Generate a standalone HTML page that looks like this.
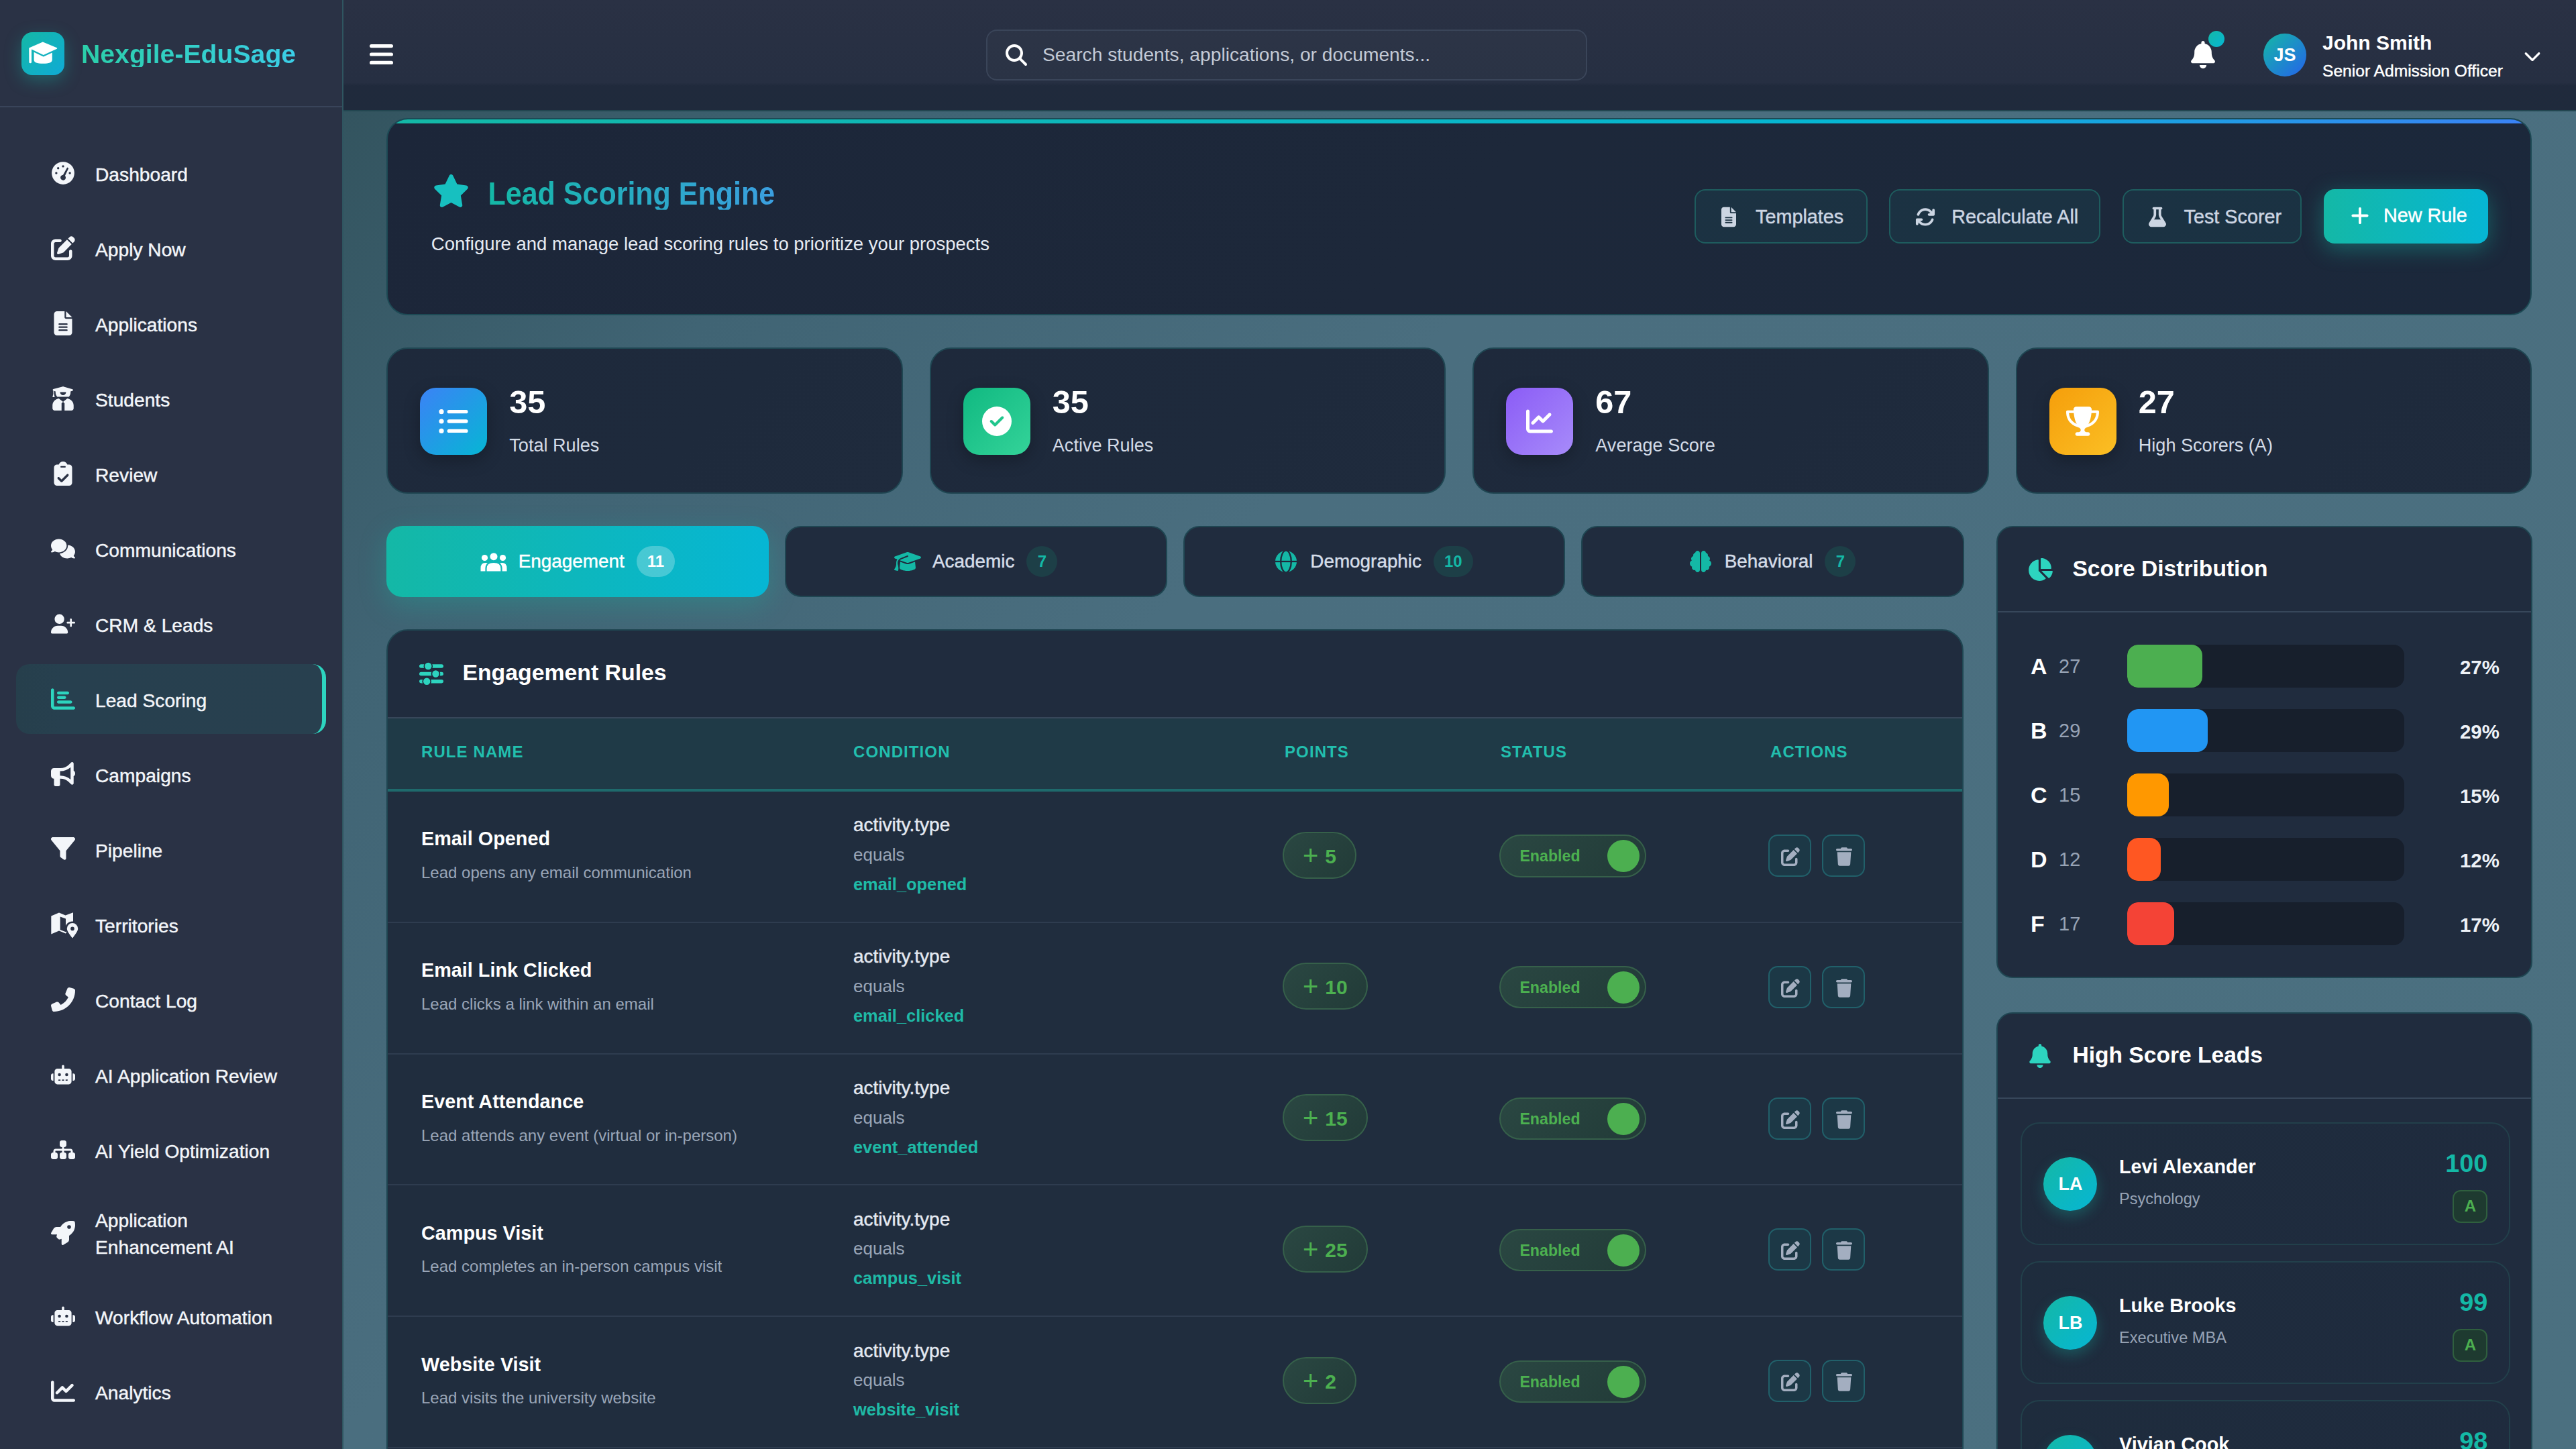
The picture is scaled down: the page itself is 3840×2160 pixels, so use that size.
<!DOCTYPE html>
<html><head><meta charset="utf-8"><title>Lead Scoring</title>
<style>
*{margin:0;padding:0;box-sizing:border-box}
html{zoom:2}
@media (max-width:2500px){html{zoom:1}}
body{width:1920px;height:1080px;overflow:hidden;font-family:"Liberation Sans",sans-serif;background:#2a3245}
#app{position:relative;width:1920px;height:1080px;overflow:hidden}
svg{display:block}
/* sidebar */
.sb{position:absolute;left:0;top:0;width:256px;height:1080px;background:#2a3245;border-right:1px solid #2f5560;z-index:3}
.logo{position:absolute;left:0;top:0;width:255px;height:80px;border-bottom:1px solid #39445a}
.lbox{position:absolute;left:16px;top:24px;width:32px;height:32px;border-radius:8px;background:linear-gradient(135deg,#14b8a6,#0ea5e9 140%);box-shadow:0 4px 12px rgba(20,184,166,.35)}
.lbox svg{position:absolute;left:6px;top:6px;width:20px;height:20px;color:#fff}
.ltxt{position:absolute;left:60.5px;top:30.4px;font-size:19.6px;line-height:19.6px;font-weight:700;background:linear-gradient(90deg,#2bcfa9,#3bcfe8);-webkit-background-clip:text;background-clip:text;color:transparent;white-space:nowrap}
.nav{position:absolute;left:12px;width:231px;border-radius:10px;color:#f3f6fa}
.nav.active{background:linear-gradient(90deg,#263f4c,#27404f 15%,#28404f);border-right:3px solid #2dd4bf}
.ni{position:absolute;left:26px;top:50%;width:18px;height:18px;margin-top:-9px}
.ni svg{width:18px;height:18px;margin:auto}
.nav.active .ni{color:#2dd4bf}
.nt{position:absolute;left:59px;top:16.8px;font-size:14.1px;line-height:20px;white-space:nowrap}
/* header */
.hd{position:absolute;left:256px;top:0;width:1664px;height:83px;background:linear-gradient(180deg,#2a3144 0%,#262f42 75%,#202a3c 78%,#1f2a3c 100%);border-bottom:1px solid #224650;z-index:2}
.hamb{position:absolute;left:19.6px;top:33px;width:17.5px;height:15px;color:#fff}
.hamb svg{width:17.5px;height:15px}
.search{position:absolute;left:479px;top:22px;width:448px;height:38px;border-radius:8px;border:1px solid #3a4559;background:rgba(255,255,255,.02)}
.search .si{position:absolute;left:13.5px;top:10px;width:16px;height:16px;color:#fff}
.search span{position:absolute;left:41px;top:10.5px;font-size:14.1px;line-height:14.1px;color:#c3cad6;white-space:nowrap}
.bell{position:absolute;left:1377px;top:30.5px;width:18px;height:20.5px;color:#fff}
.bell svg{width:18px;height:20.5px}
.bell i{position:absolute;left:13px;top:-7.5px;width:12px;height:12px;border-radius:50%;background:linear-gradient(135deg,#14b8a6,#06b6d4)}
.av{position:absolute;left:1431px;top:24.8px;width:32px;height:32px;border-radius:50%;background:linear-gradient(135deg,#14b8a6,#2563eb);color:#fff;font-weight:700;font-size:13.5px;line-height:32px;text-align:center}
.uname{position:absolute;left:1475px;top:24.6px;font-size:15px;line-height:15px;font-weight:700;color:#fff;white-space:nowrap}
.urole{position:absolute;left:1475px;top:47px;font-size:12.3px;line-height:12.3px;color:#fff;white-space:nowrap}
.chev{position:absolute;left:1625px;top:35px;width:13px;height:13px;color:#fff}
.chev svg{width:13px;height:13px}
/* main */
main{position:absolute;left:256px;top:83px;width:1664px;height:997px;background:linear-gradient(135deg,#33545f 0%,#406474 16%,#4a6e7f 37%,#4b7080 100%);z-index:1}
main>section,main>.tab{position:absolute}
.hero{left:32px;top:5px;width:1599px;height:147px;border-radius:16px;background:linear-gradient(135deg,#1c2639,#1d283a 50%,#1b283b);border:1px solid #1d4a55;overflow:hidden}
.hero:before{content:"";position:absolute;left:0;top:0;right:0;height:3px;background:linear-gradient(90deg,#14b8a6,#06b6d4 70%,#3b82f6)}
.hstar{position:absolute;left:33.3px;top:40.5px;width:27.5px;height:25.5px;color:#17c0c0}
.hstar svg{width:27.5px;height:25.5px}
h1{position:absolute;left:74.75px;top:45.6px;transform:scaleY(1.11);transform-origin:0 18.2px;font-size:21.5px;line-height:21.5px;font-weight:700;background:linear-gradient(90deg,#14b8a6,#3b9fe0);-webkit-background-clip:text;background-clip:text;color:transparent;white-space:nowrap}
.sub{position:absolute;left:32.4px;top:86px;font-size:13.74px;line-height:13.74px;color:#e6ebf2;white-space:nowrap}
.btn{position:absolute;top:52.1px;height:40.4px;border-radius:8px;border:1px solid #1e5c5e;background:rgba(20,184,166,.08);color:#ccd5e2}
.btn svg{position:absolute;top:12px;width:15px;height:15.5px;color:#ccd5e2}
.btn span{position:absolute;top:12.6px;font-size:14.4px;line-height:14.4px;white-space:nowrap}
.b1{left:974px;width:128.75px}.b1 svg{left:19px;width:11px}.b1 span{left:44.5px}
.b2{left:1119.15px;width:157.35px}.b2 svg{left:18.5px;width:15px}.b2 span{left:45.5px}
.b3{left:1293.15px;width:133.4px}.b3 svg{left:18.5px;width:13px}.b3 span{left:44.6px}
.b4{left:1442.95px;width:122.75px}.b4 svg{left:19.5px;width:15px}.b4 span{left:44.5px}
.prim{background:linear-gradient(90deg,#14b8a6,#06b6d4);border:none;color:#fff;box-shadow:0 4px 16px rgba(20,184,166,.4)}
.prim svg{color:#fff}
.stat{top:175.8px;width:384.75px;height:109.2px;border-radius:16px;background:linear-gradient(135deg,#1e293b,#1e2a3c 60%,#1f2b3d);border:1px solid #1f4652}
.s1{left:32px}.s2{left:436.75px}.s3{left:841.5px}.s4{left:1246.25px}
.sic{position:absolute;left:24px;top:29.2px;width:50px;height:50px;border-radius:12px;box-shadow:0 4px 12px rgba(0,0,0,.25)}
.sic svg{position:absolute;left:15px;top:15px;width:20px;height:20px;color:#fff}
.sn{position:absolute;left:90.65px;top:27.7px;font-size:24.3px;line-height:24.3px;font-weight:700;color:#fff}
.sl{position:absolute;left:90.65px;top:65.2px;font-size:13.54px;line-height:13.54px;color:#d3dbe7;white-space:nowrap}
.tab{top:309px;width:284.9px;height:53px;border-radius:12px;background:#202c3e;border:1px solid #1f4652;display:flex;align-items:center;justify-content:center;color:#d5dde8}
.t1{left:32px}.t2{left:328.9px}.t3{left:625.8px}.t4{left:922.6px;width:285.4px}
.tab svg{width:20px;height:18px;color:#14b8a6;margin-right:8.5px}
.tab .tl{font-size:13.93px;line-height:14px}
.tab .tb{margin-left:9px;height:23px;min-width:23px;padding:0 8px;border-radius:12px;background:#1d3f47;color:#14b8a6;font-weight:700;font-size:12px;line-height:23px;text-align:center}
.tab.act{background:linear-gradient(90deg,#14b8a6,#06b6d4);border:none;color:#fff;box-shadow:0 6px 20px rgba(20,184,166,.3)}
.tab.act svg{color:#fff}
.tab.act .tb{background:rgba(255,255,255,.25);color:#fff}
.rules{left:32px;top:386px;width:1175.5px;height:700px;border-radius:16px;background:#202c3e;border:1px solid #1f4652;overflow:hidden}
.rh{position:absolute;left:0;top:0;width:100%;height:65.5px;border-bottom:1px solid #37475a}
.rhi{position:absolute;left:23.45px;top:18.5px;width:18px;height:25px;color:#2dd4bf}
.rh span{position:absolute;left:55.7px;top:23px;font-size:16.9px;line-height:16.9px;font-weight:700;color:#fff}
.th{position:absolute;left:0;top:65.5px;width:100%;height:54.5px;background:#1f3a47;border-bottom:2px solid #1e6a6c}
.th span{position:absolute;top:19px;font-size:12px;line-height:12px;font-weight:700;letter-spacing:.55px;color:#22bfae}
.row{position:absolute;left:0;width:100%;height:97.9px;border-bottom:1px solid #2e3c4f;background:#202d3e}
.rn{position:absolute;left:25px;top:28.2px;font-size:14.4px;line-height:14.4px;font-weight:700;color:#fff;white-space:nowrap}
.rd{position:absolute;left:25px;top:54.5px;font-size:12px;line-height:12px;color:#9aa6b8;white-space:nowrap}
.c1{position:absolute;left:347px;top:18.2px;font-size:14px;line-height:14px;color:#e4e9f1}
.c2{position:absolute;left:347px;top:40.5px;font-size:13px;line-height:13px;color:#9aa6b8}
.c3{position:absolute;left:347px;top:63px;font-size:12.7px;line-height:12.7px;font-weight:700;color:#1fbaa6}
.pts{position:absolute;left:667px;top:29.8px;height:35px;padding:0 14px 0 14px;border-radius:18px;border:1px solid #36604a;background:linear-gradient(135deg,#2a4742,#223b38);color:#4cb050;font-size:15px;font-weight:700;line-height:33px;white-space:nowrap}
.pts .pl{font-weight:400;font-size:20px;margin-right:5px;vertical-align:-1px}
.tog{position:absolute;left:828.7px;top:32.2px;width:109.5px;height:31.6px;border-radius:16px;border:1px solid #36604a;background:linear-gradient(135deg,#2a4742,#223b38)}
.tog span{position:absolute;left:14px;top:9.5px;font-size:11.6px;line-height:11.6px;font-weight:700;color:#4cb050}
.tog i{position:absolute;left:79.5px;top:3px;width:24px;height:24px;border-radius:50%;background:#4caf50}
.ab{position:absolute;top:32px;width:32px;height:31.5px;border-radius:7px;border:1px solid #21606a;background:#1c3846}
.ab1{left:1028.85px}.ab2{left:1069px}
.ab svg{position:absolute;left:8.5px;top:8.5px;width:14px;height:14px;color:#a3aec0}
.ab2 svg{left:9.5px;width:12px}
.dist{left:1232px;top:308.9px;width:399.5px;height:337px;border-radius:12px;background:#202c3e;border:1px solid #1f4652}
.hsl{left:1232px;top:671.5px;width:399.5px;height:420px;border-radius:12px;background:#202c3e;border:1px solid #1f4652;overflow:hidden}
.ch{position:absolute;left:0;top:0;width:100%;height:63.5px;border-bottom:1px solid #37475a}
.chi{position:absolute;left:22px;top:22.5px;width:19px;height:18px;color:#2dd4bf}
.ch span{position:absolute;left:55.7px;top:22.7px;font-size:16.8px;line-height:16.8px;font-weight:700;color:#fff;white-space:nowrap}
.gr{position:absolute;left:0;width:100%;height:32px}
.gr b{position:absolute;left:24.5px;top:7.6px;font-size:17px;line-height:17px;color:#fff}
.gc{position:absolute;left:45.5px;top:9.3px;font-size:14.5px;line-height:14.5px;color:#97a3b5}
.trk{position:absolute;left:96.6px;top:0;width:206.3px;height:32px;border-radius:8px;background:#171f2c;overflow:hidden}
.fill{height:32px;border-radius:8px}
.gp{position:absolute;left:344.5px;top:9.5px;font-size:14.7px;line-height:14.7px;font-weight:700;color:#eef2f7}
.lead{position:absolute;left:16.85px;width:365.35px;height:91.5px;border-radius:14px;border:1px solid #22404b;background:linear-gradient(135deg,#1e2c3d,#1f2b3e)}
.lav{position:absolute;left:16.4px;top:25px;width:40px;height:40px;border-radius:50%;background:linear-gradient(135deg,#14b8a6,#06b6d4);color:#fff;font-weight:700;font-size:13.5px;line-height:40px;text-align:center;box-shadow:0 4px 10px rgba(20,184,166,.3)}
.ln{position:absolute;left:72.65px;top:25px;font-size:14.4px;line-height:14.4px;font-weight:700;color:#fff;white-space:nowrap}
.lp{position:absolute;left:72.65px;top:50.3px;font-size:11.8px;line-height:11.8px;color:#97a3b5;white-space:nowrap}
.ls{position:absolute;right:16px;top:20.5px;font-size:18.9px;line-height:18.9px;font-weight:700;color:#14b8a6}
.lg{position:absolute;right:16px;top:49.5px;width:26px;height:24.4px;border-radius:6px;border:1px solid #2f5f3e;background:#1e3a30;color:#4caf50;font-size:12px;font-weight:700;line-height:22.4px;text-align:center}
.med{-webkit-text-stroke:0.25px currentColor}
.nt,.btn span,.tab .tl,.c1,.urole{-webkit-text-stroke:0.22px currentColor}
.s1 .sic svg{left:13.5px;top:13.5px;width:23px;height:23px}
.s2 .sic svg{left:14px;top:14px;width:22px;height:22px}
.s4 .sic svg{left:12.75px;top:14px;width:24.5px;height:22px}

</style></head>
<body>
<div id="app">
<aside class="sb">
 <div class="logo"><div class="lbox"><svg viewBox="0 0 32 32" style="position:absolute;left:0;top:0;width:32px;height:32px"><path fill="#fff" d="M5.6 11.7 L15.9 7.3 L26.4 11.6 Q26.9 12 26.4 12.4 L16.4 17 L7.5 12.8 L7.5 22.6 Q6.6 23.6 5.7 22.6 Z"/><path fill="#fff" d="M9.3 14.9 L16.4 18.3 L22.9 15.3 V20.6 Q22.8 23.4 16.1 23.4 Q9.3 23.4 9.3 20.6 Z"/></svg></div><div class="ltxt">Nexgile-EduSage</div></div>
 <div class="nav" style="top:103px;height:52px"><span class="ni"><svg class="" viewBox="0 0 512 512"><path fill="currentColor" d="M256 16a240 240 0 1 0 0 480a240 240 0 1 0 0-480zM256 88a24 24 0 1 1 0 48a24 24 0 1 1 0-48zM152 128a24 24 0 1 1 0 48a24 24 0 1 1 0-48zM112 232a24 24 0 1 1 0 48a24 24 0 1 1 0-48zM400 232a24 24 0 1 1 0 48a24 24 0 1 1 0-48zM344 136l30 16l-76 162a56 56 0 1 1-42-18z"/></svg></span><span class="nt">Dashboard</span></div><div class="nav" style="top:159px;height:52px"><span class="ni"><svg class="" viewBox="0 0 512 512"><path fill="currentColor" d="M471.6 21.7c-21.9-21.9-57.3-21.9-79.2 0L362.3 51.7l97.9 97.9 30.1-30.1c21.9-21.9 21.9-57.3 0-79.2L471.6 21.7zm-299.2 220c-6.1 6.1-10.8 13.6-13.5 21.9l-29.6 88.8c-2.9 8.6-.6 18.1 5.8 24.6s15.9 8.7 24.6 5.8l88.8-29.6c8.2-2.7 15.700-7.4 21.9-13.5L437.700 172.300 339.700 74.300 172.400 241.700zM96 64C43 64 0 107 0 160V416c0 53 43 96 96 96H352c53 0 96-43 96-96V320c0-17.700-14.300-32-32-32s-32 14.300-32 32v96c0 17.700-14.300 32-32 32H96c-17.700 0-32-14.300-32-32V160c0-17.700 14.300-32 32-32h96c17.700 0 32-14.300 32-32s-14.300-32-32-32H96z"/></svg></span><span class="nt">Apply Now</span></div><div class="nav" style="top:215px;height:52px"><span class="ni"><svg class="" viewBox="0 0 384 512"><path fill="currentColor" d="M64 0C28.700 0 0 28.700 0 64V448c0 35.300 28.700 64 64 64H320c35.300 0 64-28.700 64-64V160H256c-17.700 0-32-14.300-32-32V0H64zM256 0V128H384L256 0zM112 256H272c8.800 0 16 7.200 16 16s-7.200 16-16 16H112c-8.800 0-16-7.200-16-16s7.200-16 16-16zm0 64H272c8.800 0 16 7.200 16 16s-7.200 16-16 16H112c-8.800 0-16-7.200-16-16s7.200-16 16-16zm0 64H272c8.800 0 16 7.200 16 16s-7.200 16-16 16H112c-8.800 0-16-7.200-16-16s7.200-16 16-16z"/></svg></span><span class="nt">Applications</span></div><div class="nav" style="top:271px;height:52px"><span class="ni"><svg class="" viewBox="0 0 448 512"><path fill="currentColor" d="M219 2c3-1 7-1 10 0l196 60c7 2 11 9 11 16s-4 14-11 16l-42 13v33c0 30-17 60-35 80H100c-18-20-35-50-35-80v-33L32 96v64l14 60c1 4-2 8-6 8H8c-4 0-7-4-6-8l14-60V89c-7-3-11-9-11-16 0-7 4-14 11-16zM160 120c0 35 29 64 64 64s64-29 64-64zM134 256l90 70 90-70c75 10 134 72 134 148v60c0 26-22 48-48 48H256V360l-32-32-32 32v152H48c-26 0-48-22-48-48v-60c0-76 59-138 134-148z"/></svg></span><span class="nt">Students</span></div><div class="nav" style="top:327px;height:52px"><span class="ni"><svg class="" viewBox="0 0 384 512"><path fill="currentColor" d="M192 0c-41.800 0-77.400 26.700-90.500 64H64C28.700 64 0 92.700 0 128V448c0 35.300 28.700 64 64 64H320c35.300 0 64-28.700 64-64V128c0-35.300-28.700-64-64-64H282.500C269.400 26.700 233.800 0 192 0zm-40 96h80c8 0 16 8 16 16s-8 16-16 16h-80c-8 0-16-8-16-16s8-16 16-16zM305 305L177 433c-9 9-25 9-34 0L79 369c-9-9-9-25 0-34s25-9 34 0l47 47 111-111c9-9 25-9 34 0s9 25 0 34z"/></svg></span><span class="nt">Review</span></div><div class="nav" style="top:383px;height:52px"><span class="ni"><svg class="" viewBox="0 0 640 512"><path fill="currentColor" d="M208 352c114.900 0 208-78.800 208-176S322.900 0 208 0S0 78.800 0 176c0 38.600 14.700 74.300 39.600 103.400c-3.500 9.400-8.700 17.700-14.200 24.700c-4.800 6.200-9.700 11-13.300 14.300c-1.800 1.600-3.300 2.900-4.300 3.700c-.5 .4-.9 .7-1.100 .8l-.2 .2C1 327.200-1.400 334.400 .8 340.900S9.100 352 16 352c21.800 0 43.800-5.600 62.100-12.500c9.200-3.500 17.800-7.400 25.200-11.400C134.100 343.300 169.800 352 208 352zM448 176c0 112.300-99.100 196.900-216.500 207C255.800 457.400 336.400 512 432 512c38.200 0 73.900-8.700 104.700-23.900c7.500 4 16 7.900 25.200 11.400c18.300 6.900 40.300 12.500 62.100 12.500c6.900 0 13.100-4.500 15.200-11.100c2.100-6.600-.2-13.800-5.800-17.900l-.2-.2c-.2-.2-.6-.4-1.100-.8c-1-.8-2.500-2-4.300-3.700c-3.600-3.300-8.500-8.100-13.300-14.300c-5.500-7-10.700-15.400-14.200-24.700c24.900-29 39.600-64.700 39.600-103.400c0-92.800-84.900-168.900-192.600-175.500c.4 5.100 .6 10.300 .6 15.500z"/></svg></span><span class="nt">Communications</span></div><div class="nav" style="top:439px;height:52px"><span class="ni"><svg class="" viewBox="0 0 640 512"><path fill="currentColor" d="M96 128a128 128 0 1 1 256 0A128 128 0 1 1 96 128zM0 482.300C0 383.800 79.800 304 178.300 304h91.400C368.200 304 448 383.800 448 482.300c0 16.400-13.300 29.700-29.700 29.700H29.700C13.300 512 0 498.700 0 482.300zM504 312V248H440c-13.300 0-24-10.700-24-24s10.700-24 24-24h64V136c0-13.300 10.700-24 24-24s24 10.700 24 24v64h64c13.300 0 24 10.700 24 24s-10.700 24-24 24H552v64c0 13.300-10.700 24-24 24s-24-10.700-24-24z"/></svg></span><span class="nt">CRM &amp; Leads</span></div><div class="nav active" style="top:495px;height:52px"><span class="ni"><svg class="" viewBox="0 0 512 512"><path fill="currentColor" d="M32 32c17.700 0 32 14.300 32 32V400c0 8.800 7.200 16 16 16H480c17.700 0 32 14.300 32 32s-14.300 32-32 32H80c-44.200 0-80-35.800-80-80V64C0 46.300 14.300 32 32 32zm96 96c0-17.700 14.300-32 32-32l192 0c17.700 0 32 14.300 32 32s-14.300 32-32 32l-192 0c-17.700 0-32-14.300-32-32zm32 64H288c17.700 0 32 14.300 32 32s-14.300 32-32 32H160c-17.700 0-32-14.300-32-32s14.300-32 32-32zm0 96H416c17.700 0 32 14.300 32 32s-14.300 32-32 32H160c-17.700 0-32-14.300-32-32s14.300-32 32-32z"/></svg></span><span class="nt">Lead Scoring</span></div><div class="nav" style="top:551px;height:52px"><span class="ni"><svg class="" viewBox="0 0 512 512"><path fill="currentColor" d="M480 32c0-12.900-7.800-24.600-19.800-29.600s-25.700-2.200-34.900 6.900L381.700 53c-48 48-113.100 75-181 75H192 160 64c-35.300 0-64 28.700-64 64v96c0 35.300 28.700 64 64 64l0 128c0 17.700 14.300 32 32 32h64c17.700 0 32-14.300 32-32V352l8.700 0c67.900 0 133 27 181 75l43.600 43.600c9.200 9.200 22.900 11.900 34.900 6.900s19.800-16.600 19.800-29.600V300.400c18.600-8.800 32-32.500 32-60.400s-13.400-51.600-32-60.400V32zm-64 76.700V240 371.300C357.200 317.800 280.500 288 200.700 288H192V192h8.700c79.800 0 156.500-29.800 215.300-83.300z"/></svg></span><span class="nt">Campaigns</span></div><div class="nav" style="top:607px;height:52px"><span class="ni"><svg class="" viewBox="0 0 512 512"><path fill="currentColor" d="M3.900 22.900C10.500 8.800 24.600 0 40 0H472c15.400 0 29.500 8.800 36.100 22.900s4.600 30.500-5.200 42.500L320 288.900V448c0 12.100-6.800 23.200-17.700 28.600s-23.800 4.300-33.500-3l-64-48c-8.100-6-12.800-15.500-12.800-25.600V288.900L9 65.300C-.7 53.400-2.800 36.800 3.900 22.900z"/></svg></span><span class="nt">Pipeline</span></div><div class="nav" style="top:663px;height:52px"><span class="ni"><svg class="" viewBox="0 0 36 36" style="overflow:visible"><path fill="currentColor" fill-rule="evenodd" d="M0.3 5.6 L12 0.6 L21.6 4.6 L33 0.2 V24 L21.7 31.5 L12 27.6 L0.3 32.6 Z M13.7 6.4 L22 9.4 V29.2 L13.7 26 Z"/><path fill="#2a3245" d="M32 13.4 a10.8 10.8 0 0 1 10.8 10.8 c0 4.5 -4 9.6 -10.8 17.8 c-6.8 -8.2 -10.8 -13.3 -10.8 -17.8 a10.8 10.8 0 0 1 10.8 -10.8z"/><path fill="currentColor" d="M32 16 a8.2 8.2 0 0 1 8.2 8.2 c0 3.6 -3.2 7.6 -8.2 14.4 c-5 -6.8 -8.2 -10.8 -8.2 -14.4 a8.2 8.2 0 0 1 8.2 -8.2z"/><circle cx="32" cy="24.4" r="2.8" fill="#2a3245"/></svg></span><span class="nt">Territories</span></div><div class="nav" style="top:719px;height:52px"><span class="ni"><svg style="transform:scaleX(-1)" class="" viewBox="0 0 512 512"><path fill="currentColor" d="M164.900 24.600c-7.700-18.600-28-28.500-47.400-23.200l-88 24C12.100 30.200 0 46 0 64C0 311.400 200.600 512 448 512c18 0 33.800-12.100 38.600-29.500l24-88c5.300-19.400-4.600-39.700-23.200-47.400l-96-40c-16.300-6.800-35.200-2.100-46.300 11.600L304.700 368C234.300 334.700 177.300 277.700 144 207.300L193.300 167c13.700-11.200 18.400-30 11.600-46.300l-40-96z"/></svg></span><span class="nt">Contact Log</span></div><div class="nav" style="top:775px;height:52px"><span class="ni"><svg class="" viewBox="0 0 640 512"><path fill="currentColor" d="M320 0c17.700 0 32 14.300 32 32V96H472c39.800 0 72 32.200 72 72V440c0 39.800-32.200 72-72 72H168c-39.800 0-72-32.200-72-72V168c0-39.800 32.200-72 72-72H288V32c0-17.700 14.300-32 32-32zM208 384c-8.800 0-16 7.200-16 16s7.200 16 16 16h32c8.800 0 16-7.200 16-16s-7.200-16-16-16H208zm96 0c-8.800 0-16 7.200-16 16s7.200 16 16 16h32c8.800 0 16-7.200 16-16s-7.200-16-16-16H304zm96 0c-8.800 0-16 7.200-16 16s7.200 16 16 16h32c8.800 0 16-7.200 16-16s-7.200-16-16-16H400zM264 256a40 40 0 1 0 -80 0 40 40 0 1 0 80 0zm152 40a40 40 0 1 0 0-80 40 40 0 1 0 0 80zM48 224H64V416H48c-26.500 0-48-21.500-48-48V272c0-26.500 21.500-48 48-48zm544 0c26.500 0 48 21.500 48 48v96c0 26.500-21.500 48-48 48H576V224h16z"/></svg></span><span class="nt">AI Application Review</span></div><div class="nav" style="top:831px;height:52px"><span class="ni"><svg class="" viewBox="0 0 576 512"><path fill="currentColor" d="M208 80c0-26.500 21.500-48 48-48h64c26.500 0 48 21.500 48 48v64c0 26.500-21.500 48-48 48h-8v40H464c30.900 0 56 25.100 56 56v32h8c26.500 0 48 21.500 48 48v64c0 26.500-21.500 48-48 48H464c-26.500 0-48-21.500-48-48V368c0-26.500 21.500-48 48-48h8V288c0-4.400-3.600-8-8-8H312v40h8c26.500 0 48 21.500 48 48v64c0 26.500-21.500 48-48 48H256c-26.500 0-48-21.500-48-48V368c0-26.500 21.500-48 48-48h8V280H112c-4.400 0-8 3.600-8 8v32h8c26.500 0 48 21.500 48 48v64c0 26.500-21.500 48-48 48H48c-26.500 0-48-21.500-48-48V368c0-26.500 21.500-48 48-48h8V288c0-30.900 25.100-56 56-56H264V192h-8c-26.500 0-48-21.500-48-48V80z"/></svg></span><span class="nt">AI Yield Optimization</span></div><div class="nav" style="top:887px;height:64px"><span class="ni"><svg class="" viewBox="0 0 512 512"><path fill="currentColor" d="M156.600 384.900L125.700 354c-8.500-8.500-11.500-20.800-7.700-32.200c3-8.900 7-20.500 11.800-33.800L24 288c-8.600 0-16.600-4.600-20.900-12.100s-4.200-16.700 .2-24.100l52.500-88.500c13-21.900 36.500-35.300 61.900-35.300l82.300 0c2.400-4 4.800-7.700 7.200-11.300C289.100-4.100 411.100-8.100 483.900 5.300c11.600 2.100 20.600 11.200 22.800 22.800c13.400 72.900 9.300 194.800-111.400 276.700c-3.500 2.400-7.300 4.800-11.300 7.200v82.300c0 25.400-13.400 49-35.300 61.900l-88.500 52.500c-7.400 4.400-16.600 4.500-24.100 .2s-12.100-12.200-12.100-20.900V380.800c-14.100 4.900-26.400 8.900-35.700 11.900c-11.200 3.600-23.400 .5-31.800-7.800zM384 168a40 40 0 1 0 0-80 40 40 0 1 0 0 80z"/></svg></span><span class="nt" style="top:12.6px">Application<br>Enhancement AI</span></div><div class="nav" style="top:955px;height:52px"><span class="ni"><svg class="" viewBox="0 0 640 512"><path fill="currentColor" d="M320 0c17.700 0 32 14.300 32 32V96H472c39.800 0 72 32.200 72 72V440c0 39.800-32.200 72-72 72H168c-39.800 0-72-32.200-72-72V168c0-39.800 32.200-72 72-72H288V32c0-17.700 14.300-32 32-32zM208 384c-8.800 0-16 7.200-16 16s7.200 16 16 16h32c8.800 0 16-7.200 16-16s-7.200-16-16-16H208zm96 0c-8.800 0-16 7.200-16 16s7.200 16 16 16h32c8.800 0 16-7.200 16-16s-7.200-16-16-16H304zm96 0c-8.800 0-16 7.200-16 16s7.200 16 16 16h32c8.800 0 16-7.200 16-16s-7.200-16-16-16H400zM264 256a40 40 0 1 0 -80 0 40 40 0 1 0 80 0zm152 40a40 40 0 1 0 0-80 40 40 0 1 0 0 80zM48 224H64V416H48c-26.500 0-48-21.500-48-48V272c0-26.500 21.500-48 48-48zm544 0c26.500 0 48 21.500 48 48v96c0 26.500-21.500 48-48 48H576V224h16z"/></svg></span><span class="nt">Workflow Automation</span></div><div class="nav" style="top:1011px;height:52px"><span class="ni"><svg class="" viewBox="0 0 512 512"><path fill="currentColor" d="M64 64c0-17.700-14.300-32-32-32S0 46.300 0 64V400c0 44.200 35.800 80 80 80H480c17.700 0 32-14.300 32-32s-14.300-32-32-32H80c-8.800 0-16-7.200-16-16V64zm406.600 86.600c12.500-12.500 12.500-32.800 0-45.300s-32.800-12.500-45.300 0L320 210.700l-57.400-57.400c-12.500-12.500-32.800-12.500-45.300 0l-112 112c-12.500 12.500-12.500 32.800 0 45.300s32.800 12.500 45.300 0L240 221.300l57.400 57.400c12.500 12.500 32.800 12.500 45.300 0l128-128z"/></svg></span><span class="nt">Analytics</span></div>
</aside>
<header class="hd">
 <div class="hamb"><svg class="" viewBox="0 0 35 30"><g fill="currentColor"><rect x="0" y="0" width="35" height="5.2" rx="2.6"/><rect x="0" y="12.4" width="35" height="5.2" rx="2.6"/><rect x="0" y="24.8" width="35" height="5.2" rx="2.6"/></g></svg></div>
 <div class="search"><svg class="si" viewBox="0 0 512 512"><path fill="currentColor" d="M416 208c0 45.900-14.900 88.300-40 122.700L502.600 457.400c12.500 12.500 12.500 32.800 0 45.300s-32.800 12.500-45.300 0L330.700 376c-34.400 25.200-76.800 40-122.700 40C93.100 416 0 322.900 0 208S93.100 0 208 0S416 93.100 416 208zM208 352a144 144 0 1 0 0-288 144 144 0 1 0 0 288z"/></svg><span>Search students, applications, or documents...</span></div>
 <div class="bell"><svg class="" viewBox="0 0 448 512"><path fill="currentColor" d="M224 0c-17.700 0-32 14.300-32 32V51.200C119 66 64 130.600 64 208v18.800c0 47-17.300 92.400-48.500 127.600l-7.400 8.300c-8.400 9.400-10.400 22.900-5.300 34.400S19.400 416 32 416H416c12.600 0 24-7.400 29.200-18.900s3.100-25-5.300-34.400l-7.400-8.300C401.300 319.200 384 273.900 384 226.800V208c0-77.400-55-142-128-156.800V32c0-17.700-14.300-32-32-32zm45.300 493.300c12-12 18.700-28.300 18.700-45.300H224 160c0 17 6.700 33.300 18.700 45.300s28.300 18.700 45.300 18.700s33.300-6.700 45.300-18.700z"/></svg><i></i></div>
 <div class="av">JS</div>
 <div class="uname">John Smith</div><div class="urole">Senior Admission Officer</div>
 <div class="chev"><svg class="" viewBox="0 0 512 512"><path fill="currentColor" d="M233.400 406.600c12.500 12.500 32.800 12.500 45.300 0l192-192c12.500-12.500 12.500-32.800 0-45.300s-32.800-12.500-45.300 0L256 338.700 86.600 169.400c-12.500-12.500-32.800-12.500-45.300 0s-12.500 32.800 0 45.300l192 192z"/></svg></div>
</header>
<main>
 <section class="hero">
  <div class="hstar"><svg class="" viewBox="0 0 576 512"><path fill="currentColor" d="M316.900 18C311.600 7 300.400 0 288.100 0s-23.400 7-28.800 18L195 150.300 51.400 171.500c-12 1.800-22 10.200-25.700 21.700s-.7 24.200 7.900 32.700L137.800 329 113.200 474.700c-2 12 3 24.200 12.900 31.300s23 8 33.800 2.300l128.300-68.500 128.300 68.500c10.800 5.700 23.900 4.900 33.800-2.300s14.900-19.300 12.900-31.300L438.500 329 542.700 225.900c8.600-8.500 11.700-21.200 7.900-32.700s-13.700-19.900-25.700-21.700L381.200 150.300 316.900 18z"/></svg></div>
  <h1>Lead Scoring Engine</h1>
  <p class="sub">Configure and manage lead scoring rules to prioritize your prospects</p>
  <div class="btn b1"><svg class="" viewBox="0 0 384 512"><path fill="currentColor" d="M64 0C28.700 0 0 28.700 0 64V448c0 35.300 28.700 64 64 64H320c35.300 0 64-28.700 64-64V160H256c-17.700 0-32-14.300-32-32V0H64zM256 0V128H384L256 0zM112 256H272c8.800 0 16 7.200 16 16s-7.200 16-16 16H112c-8.800 0-16-7.200-16-16s7.200-16 16-16zm0 64H272c8.800 0 16 7.200 16 16s-7.200 16-16 16H112c-8.800 0-16-7.200-16-16s7.200-16 16-16zm0 64H272c8.800 0 16 7.200 16 16s-7.200 16-16 16H112c-8.800 0-16-7.200-16-16s7.200-16 16-16z"/></svg><span>Templates</span></div>
  <div class="btn b2"><svg class="" viewBox="0 0 512 512"><path fill="currentColor" d="M105.100 202.600c7.700-21.800 20.200-42.300 37.800-59.800c62.500-62.500 163.800-62.500 226.300 0L386.300 160H352c-17.700 0-32 14.300-32 32s14.300 32 32 32H463.500c0 0 0 0 0 0h.4c17.700 0 32-14.300 32-32V80c0-17.700-14.300-32-32-32s-32 14.300-32 32v35.200L414.400 97.600c-87.500-87.500-229.300-87.500-316.800 0C73.200 122 55.600 150.700 44.800 181.400c-5.900 16.700 2.900 34.900 19.500 40.800s34.900-2.900 40.800-19.500zM39 289.300c-5 1.500-9.800 4.200-13.700 8.200c-4 4-6.700 8.800-8.100 14c-.3 1.200-.6 2.500-.8 3.800c-.3 1.700-.4 3.400-.4 5.100V432c0 17.700 14.300 32 32 32s32-14.300 32-32V396.900l17.600 17.500 0 0c87.500 87.400 229.300 87.400 316.700 0c24.400-24.400 42.100-53.100 52.900-83.700c5.900-16.700-2.900-34.900-19.500-40.800s-34.900 2.900-40.800 19.500c-7.700 21.800-20.200 42.300-37.800 59.800c-62.500 62.500-163.800 62.500-226.300 0l-.1-.1L125.600 352H160c17.700 0 32-14.300 32-32s-14.300-32-32-32H48.400c-1.600 0-3.200 .1-4.800 .3s-3.100 .5-4.600 1z"/></svg><span>Recalculate All</span></div>
  <div class="btn b3"><svg class="" viewBox="0 0 448 512"><path fill="currentColor" d="M288 0H160 128C110.300 0 96 14.300 96 32s14.300 32 32 32V196.800c0 11.800-3.300 23.500-9.500 33.500L10.300 406.200C3.600 417.200 0 429.700 0 442.600C0 480.900 31.100 512 69.400 512H378.600c38.300 0 69.400-31.100 69.400-69.400c0-12.800-3.600-25.400-10.300-36.400L329.500 230.400c-6.200-10.100-9.500-21.700-9.500-33.500V64c17.700 0 32-14.300 32-32s-14.300-32-32-32H288zM192 196.800V64h64V196.800c0 23.700 6.600 46.900 19 67.100L309.500 320h-171L173 263.900c12.400-20.200 19-43.400 19-67.100z"/></svg><span>Test Scorer</span></div>
  <div class="btn b4 prim"><svg class="" viewBox="0 0 448 512"><path fill="currentColor" d="M256 80c0-17.700-14.300-32-32-32s-32 14.300-32 32V224H48c-17.700 0-32 14.300-32 32s14.300 32 32 32H192V432c0 17.700 14.300 32 32 32s32-14.300 32-32V288H400c17.700 0 32-14.300 32-32s-14.300-32-32-32H256V80z"/></svg><span>New Rule</span></div>
 </section>
 <section class="stat s1"><div class="sic" style="background:linear-gradient(135deg,#3b82f6,#06b6d4)"><svg class="" viewBox="0 0 512 512"><g fill="currentColor"><circle cx="56" cy="96" r="40"/><circle cx="56" cy="256" r="40"/><circle cx="56" cy="416" r="40"/><rect x="152" y="66" width="344" height="60" rx="30"/><rect x="152" y="226" width="344" height="60" rx="30"/><rect x="152" y="386" width="344" height="60" rx="30"/></g></svg></div><div class="sn">35</div><div class="sl">Total Rules</div></section>
 <section class="stat s2"><div class="sic" style="background:linear-gradient(135deg,#10b981,#34d399)"><svg class="" viewBox="0 0 512 512"><path fill="currentColor" d="M256 512A256 256 0 1 0 256 0a256 256 0 1 0 0 512zM369 209L241 337c-9.400 9.400-24.600 9.400-33.900 0l-64-64c-9.400-9.400-9.400-24.600 0-33.900s24.600-9.400 33.900 0l47 47L335 175c9.400-9.400 24.600-9.400 33.900 0s9.400 24.600 0 33.900z"/></svg></div><div class="sn">35</div><div class="sl">Active Rules</div></section>
 <section class="stat s3"><div class="sic" style="background:linear-gradient(135deg,#8b5cf6,#a78bfa)"><svg class="" viewBox="0 0 512 512"><path fill="currentColor" d="M64 64c0-17.700-14.300-32-32-32S0 46.300 0 64V400c0 44.200 35.800 80 80 80H480c17.700 0 32-14.300 32-32s-14.300-32-32-32H80c-8.800 0-16-7.200-16-16V64zm406.600 86.600c12.500-12.500 12.500-32.800 0-45.300s-32.800-12.500-45.300 0L320 210.700l-57.400-57.400c-12.500-12.500-32.800-12.500-45.300 0l-112 112c-12.500 12.500-12.500 32.800 0 45.300s32.800 12.500 45.300 0L240 221.300l57.400 57.400c12.500 12.500 32.800 12.500 45.300 0l128-128z"/></svg></div><div class="sn">67</div><div class="sl">Average Score</div></section>
 <section class="stat s4"><div class="sic" style="background:linear-gradient(135deg,#f59e0b,#fbbf24)"><svg class="" viewBox="0 0 576 512"><path fill="currentColor" d="M400 0H176c-26.500 0-48.100 21.800-47.100 48.200c.2 5.300 .4 10.600 .7 15.800H24C10.700 64 0 74.700 0 88c0 92.600 33.500 157 78.500 200.700c44.300 43.100 98.300 64.800 138.100 75.800c23.400 6.500 39.400 26 39.400 45.600c0 20.900-17 37.900-37.900 37.900H192c-17.700 0-32 14.300-32 32s14.300 32 32 32H384c17.700 0 32-14.300 32-32s-14.300-32-32-32H357.900C337 448 320 431 320 410.100c0-19.600 15.900-39.200 39.400-45.600c39.900-11 93.900-32.700 138.200-75.800C542.500 245 576 180.600 576 88c0-13.300-10.700-24-24-24H446.400c.3-5.200 .5-10.400 .7-15.800C448.100 21.800 426.500 0 400 0zM48.900 112h84.400c9.100 90.100 29.200 150.300 51.900 190.600c-24.900-11-50.800-26.500-73.200-48.300c-32-31.100-58-76-63-142.300zM464.100 254.300c-22.400 21.800-48.300 37.300-73.200 48.300c22.700-40.300 42.800-100.500 51.900-190.600h84.400c-5.100 66.300-31.100 111.200-63 142.300z"/></svg></div><div class="sn">27</div><div class="sl">High Scorers (A)</div></section>

 <div class="tab t1 act"><svg class="" viewBox="0 0 40 29"><g fill="currentColor"><circle cx="6.5" cy="9" r="4.6"/><circle cx="33.5" cy="9" r="4.6"/><path d="M0.5 29 V24.5 Q0.5 16.5 7.5 16.5 Q12 16.5 13 19 L11 29 Z"/><path d="M39.5 29 V24.5 Q39.5 16.5 32.5 16.5 Q28 16.5 27 19 L29 29 Z"/></g><g fill="currentColor" stroke="#11b8b8" stroke-width="2.2"><circle cx="20" cy="7.2" r="6.6"/><path d="M8.5 30 V25 Q8.5 15.5 20 15.5 Q31.5 15.5 31.5 25 V30 Z"/></g></svg><span class="tl">Engagement</span><span class="tb">11</span></div>
 <div class="tab t2"><svg class="" viewBox="0 0 640 512"><path fill="currentColor" d="M320 32c-8.100 0-16.100 1.400-23.700 4.100L15.800 137.400C6.300 140.900 0 149.900 0 160s6.300 19.100 15.800 22.600l57.900 20.900C57.300 229.300 48 259.800 48 291.900v28.100c0 28.400-10.800 57.700-22.300 80.800c-6.500 13-13.900 25.800-22.500 37.600C0 442.700-.9 448.300 .9 453.400s6 8.900 11.200 10.200l64 16c4.200 1.100 8.700 .3 12.400-2s6.300-6.100 7.100-10.400c8.600-42.800 4.300-81.200-2.100-108.700C90.300 344.300 86 329.800 80 316.500V291.900c0-30.200 10.200-58.700 27.900-81.500c12.900-15.500 29.600-28 49.200-35.700l157-61.700c8.200-3.200 17.500 .8 20.700 9s-.8 17.500-9 20.700l-157 61.700c-12.400 4.900-23.300 12.400-32.200 21.600l159.600 57.600c7.600 2.700 15.600 4.100 23.700 4.100s16.100-1.400 23.700-4.100L624.200 182.600c9.500-3.400 15.800-12.500 15.800-22.600s-6.300-19.100-15.800-22.600L343.700 36.100C336.100 33.400 328.100 32 320 32zM128 408c0 35.300 86 72 192 72s192-36.700 192-72L496.700 262.600 354.500 314c-11.100 4-22.800 6-34.500 6s-23.500-2-34.500-6L143.300 262.600 128 408z"/></svg><span class="tl">Academic</span><span class="tb">7</span></div>
 <div class="tab t3"><svg class="" viewBox="0 0 16 16" style="width:16px;height:16px;margin-right:10px"><circle cx="8" cy="8" r="8" fill="currentColor"/><ellipse cx="8" cy="8" rx="3.9" ry="8.2" fill="none" stroke="#1f2a3c" stroke-width="1.15"/><line x1="0" y1="8" x2="16" y2="8" stroke="#1f2a3c" stroke-width="1.15"/></svg><span class="tl">Demographic</span><span class="tb">10</span></div>
 <div class="tab t4"><svg style="width:16px;height:16px;margin-right:10px" class="" viewBox="0 0 512 512"><path fill="currentColor" d="M184 0c30.900 0 56 25.100 56 56V456c0 30.900-25.100 56-56 56c-28.900 0-52.700-21.900-55.700-50.100c-5.200 1.400-10.700 2.100-16.300 2.100c-35.300 0-64-28.700-64-64c0-7.400 1.300-14.600 3.600-21.200C21.400 367.400 0 338.200 0 304c0-31.900 18.700-59.500 45.800-72.300C37.100 220.800 32 207 32 192c0-30.700 21.600-56.300 50.400-62.600C80.800 123.900 80 118 80 112c0-29.900 20.600-55.100 48.300-62.100C131.300 21.900 155.100 0 184 0zM328 0c28.900 0 52.600 21.900 55.700 49.900c27.800 7 48.300 32.100 48.300 62.100c0 6-.8 11.900-2.400 17.400c28.800 6.200 50.400 31.900 50.400 62.600c0 15-5.100 28.800-13.800 39.700C493.300 244.500 512 272.100 512 304c0 34.200-21.400 63.400-51.600 74.800c2.300 6.600 3.600 13.800 3.600 21.200c0 35.300-28.700 64-64 64c-5.600 0-11.100-.7-16.300-2.100c-3 28.200-26.800 50.100-55.700 50.100c-30.900 0-56-25.100-56-56V56c0-30.900 25.100-56 56-56z"/></svg><span class="tl">Behavioral</span><span class="tb">7</span></div>

 <section class="rules">
  <div class="rh"><svg class="rhi" viewBox="0 0 36 50"><g fill="currentColor" stroke="#1f2a3c" stroke-width="1.6"><rect x="0" y="13.3" width="36" height="5.4" rx="2.7" stroke="none"/><rect x="0" y="24.8" width="36" height="5.4" rx="2.7" stroke="none"/><rect x="0" y="36" width="36" height="5.4" rx="2.7" stroke="none"/><circle cx="13.3" cy="16" r="6"/><circle cx="24.5" cy="27.5" r="6"/><circle cx="11.2" cy="38.7" r="6"/></g></svg><span>Engagement Rules</span></div>
  <div class="th"><span style="left:25px">RULE NAME</span><span style="left:347px">CONDITION</span><span style="left:668.5px">POINTS</span><span style="left:829.5px">STATUS</span><span style="left:1030.5px">ACTIONS</span></div>
  <div class="row" style="top:120.00px">
<div class="rn">Email Opened</div><div class="rd">Lead opens any email communication</div>
<div class="c1">activity.type</div><div class="c2">equals</div><div class="c3">email_opened</div>
<div class="pts"><span class="pl">+</span>5</div>
<div class="tog"><span>Enabled</span><i></i></div>
<div class="ab ab1"><svg class="" viewBox="0 0 512 512"><path fill="currentColor" d="M471.6 21.7c-21.9-21.9-57.3-21.9-79.2 0L362.3 51.7l97.9 97.9 30.1-30.1c21.9-21.9 21.9-57.3 0-79.2L471.6 21.7zm-299.2 220c-6.1 6.1-10.8 13.6-13.5 21.9l-29.6 88.8c-2.9 8.6-.6 18.1 5.8 24.6s15.9 8.7 24.6 5.8l88.8-29.6c8.2-2.7 15.700-7.4 21.9-13.5L437.700 172.300 339.700 74.300 172.400 241.700zM96 64C43 64 0 107 0 160V416c0 53 43 96 96 96H352c53 0 96-43 96-96V320c0-17.700-14.300-32-32-32s-32 14.300-32 32v96c0 17.700-14.300 32-32 32H96c-17.700 0-32-14.300-32-32V160c0-17.700 14.300-32 32-32h96c17.700 0 32-14.300 32-32s-14.300-32-32-32H96z"/></svg></div><div class="ab ab2"><svg class="" viewBox="0 0 448 512"><path fill="currentColor" d="M135.200 17.700L128 32H32C14.300 32 0 46.300 0 64S14.300 96 32 96H416c17.700 0 32-14.300 32-32s-14.300-32-32-32H320l-7.200-14.300C307.400 6.800 296.300 0 284.200 0H163.800c-12.100 0-23.200 6.800-28.600 17.700zM416 128H32L53.200 467c1.600 25.300 22.600 45 47.900 45H346.900c25.300 0 46.300-19.700 47.900-45L416 128z"/></svg></div>
</div><div class="row" style="top:217.90px">
<div class="rn">Email Link Clicked</div><div class="rd">Lead clicks a link within an email</div>
<div class="c1">activity.type</div><div class="c2">equals</div><div class="c3">email_clicked</div>
<div class="pts"><span class="pl">+</span>10</div>
<div class="tog"><span>Enabled</span><i></i></div>
<div class="ab ab1"><svg class="" viewBox="0 0 512 512"><path fill="currentColor" d="M471.6 21.7c-21.9-21.9-57.3-21.9-79.2 0L362.3 51.7l97.9 97.9 30.1-30.1c21.9-21.9 21.9-57.3 0-79.2L471.6 21.7zm-299.2 220c-6.1 6.1-10.8 13.6-13.5 21.9l-29.6 88.8c-2.9 8.6-.6 18.1 5.8 24.6s15.9 8.7 24.6 5.8l88.8-29.6c8.2-2.7 15.700-7.4 21.9-13.5L437.700 172.300 339.700 74.300 172.400 241.700zM96 64C43 64 0 107 0 160V416c0 53 43 96 96 96H352c53 0 96-43 96-96V320c0-17.700-14.300-32-32-32s-32 14.300-32 32v96c0 17.700-14.300 32-32 32H96c-17.700 0-32-14.300-32-32V160c0-17.700 14.300-32 32-32h96c17.700 0 32-14.300 32-32s-14.300-32-32-32H96z"/></svg></div><div class="ab ab2"><svg class="" viewBox="0 0 448 512"><path fill="currentColor" d="M135.200 17.700L128 32H32C14.300 32 0 46.300 0 64S14.300 96 32 96H416c17.700 0 32-14.300 32-32s-14.300-32-32-32H320l-7.200-14.300C307.400 6.800 296.300 0 284.200 0H163.800c-12.100 0-23.200 6.800-28.600 17.700zM416 128H32L53.200 467c1.600 25.300 22.600 45 47.900 45H346.900c25.300 0 46.300-19.700 47.900-45L416 128z"/></svg></div>
</div><div class="row" style="top:315.80px">
<div class="rn">Event Attendance</div><div class="rd">Lead attends any event (virtual or in-person)</div>
<div class="c1">activity.type</div><div class="c2">equals</div><div class="c3">event_attended</div>
<div class="pts"><span class="pl">+</span>15</div>
<div class="tog"><span>Enabled</span><i></i></div>
<div class="ab ab1"><svg class="" viewBox="0 0 512 512"><path fill="currentColor" d="M471.6 21.7c-21.9-21.9-57.3-21.9-79.2 0L362.3 51.7l97.9 97.9 30.1-30.1c21.9-21.9 21.9-57.3 0-79.2L471.6 21.7zm-299.2 220c-6.1 6.1-10.8 13.6-13.5 21.9l-29.6 88.8c-2.9 8.6-.6 18.1 5.8 24.6s15.9 8.7 24.6 5.8l88.8-29.6c8.2-2.7 15.700-7.4 21.9-13.5L437.700 172.300 339.700 74.300 172.400 241.700zM96 64C43 64 0 107 0 160V416c0 53 43 96 96 96H352c53 0 96-43 96-96V320c0-17.700-14.300-32-32-32s-32 14.300-32 32v96c0 17.700-14.300 32-32 32H96c-17.700 0-32-14.300-32-32V160c0-17.700 14.300-32 32-32h96c17.700 0 32-14.300 32-32s-14.300-32-32-32H96z"/></svg></div><div class="ab ab2"><svg class="" viewBox="0 0 448 512"><path fill="currentColor" d="M135.200 17.700L128 32H32C14.300 32 0 46.300 0 64S14.300 96 32 96H416c17.700 0 32-14.300 32-32s-14.300-32-32-32H320l-7.200-14.300C307.400 6.800 296.300 0 284.200 0H163.800c-12.100 0-23.200 6.800-28.600 17.700zM416 128H32L53.200 467c1.600 25.300 22.600 45 47.900 45H346.900c25.300 0 46.300-19.700 47.900-45L416 128z"/></svg></div>
</div><div class="row" style="top:413.70px">
<div class="rn">Campus Visit</div><div class="rd">Lead completes an in-person campus visit</div>
<div class="c1">activity.type</div><div class="c2">equals</div><div class="c3">campus_visit</div>
<div class="pts"><span class="pl">+</span>25</div>
<div class="tog"><span>Enabled</span><i></i></div>
<div class="ab ab1"><svg class="" viewBox="0 0 512 512"><path fill="currentColor" d="M471.6 21.7c-21.9-21.9-57.3-21.9-79.2 0L362.3 51.7l97.9 97.9 30.1-30.1c21.9-21.9 21.9-57.3 0-79.2L471.6 21.7zm-299.2 220c-6.1 6.1-10.8 13.6-13.5 21.9l-29.6 88.8c-2.9 8.6-.6 18.1 5.8 24.6s15.9 8.7 24.6 5.8l88.8-29.6c8.2-2.7 15.700-7.4 21.9-13.5L437.700 172.300 339.700 74.300 172.400 241.700zM96 64C43 64 0 107 0 160V416c0 53 43 96 96 96H352c53 0 96-43 96-96V320c0-17.700-14.300-32-32-32s-32 14.300-32 32v96c0 17.700-14.300 32-32 32H96c-17.700 0-32-14.300-32-32V160c0-17.700 14.300-32 32-32h96c17.700 0 32-14.300 32-32s-14.300-32-32-32H96z"/></svg></div><div class="ab ab2"><svg class="" viewBox="0 0 448 512"><path fill="currentColor" d="M135.200 17.700L128 32H32C14.300 32 0 46.300 0 64S14.300 96 32 96H416c17.700 0 32-14.300 32-32s-14.300-32-32-32H320l-7.200-14.300C307.400 6.800 296.300 0 284.200 0H163.800c-12.100 0-23.200 6.800-28.600 17.700zM416 128H32L53.200 467c1.600 25.300 22.600 45 47.900 45H346.900c25.300 0 46.300-19.700 47.900-45L416 128z"/></svg></div>
</div><div class="row" style="top:511.60px">
<div class="rn">Website Visit</div><div class="rd">Lead visits the university website</div>
<div class="c1">activity.type</div><div class="c2">equals</div><div class="c3">website_visit</div>
<div class="pts"><span class="pl">+</span>2</div>
<div class="tog"><span>Enabled</span><i></i></div>
<div class="ab ab1"><svg class="" viewBox="0 0 512 512"><path fill="currentColor" d="M471.6 21.7c-21.9-21.9-57.3-21.9-79.2 0L362.3 51.7l97.9 97.9 30.1-30.1c21.9-21.9 21.9-57.3 0-79.2L471.6 21.7zm-299.2 220c-6.1 6.1-10.8 13.6-13.5 21.9l-29.6 88.8c-2.9 8.6-.6 18.1 5.8 24.6s15.9 8.7 24.6 5.8l88.8-29.6c8.2-2.7 15.700-7.4 21.9-13.5L437.700 172.300 339.700 74.300 172.400 241.700zM96 64C43 64 0 107 0 160V416c0 53 43 96 96 96H352c53 0 96-43 96-96V320c0-17.700-14.300-32-32-32s-32 14.300-32 32v96c0 17.700-14.300 32-32 32H96c-17.700 0-32-14.300-32-32V160c0-17.700 14.300-32 32-32h96c17.700 0 32-14.300 32-32s-14.300-32-32-32H96z"/></svg></div><div class="ab ab2"><svg class="" viewBox="0 0 448 512"><path fill="currentColor" d="M135.200 17.700L128 32H32C14.300 32 0 46.300 0 64S14.300 96 32 96H416c17.700 0 32-14.300 32-32s-14.300-32-32-32H320l-7.200-14.300C307.400 6.800 296.300 0 284.200 0H163.800c-12.100 0-23.200 6.800-28.600 17.700zM416 128H32L53.200 467c1.600 25.300 22.600 45 47.900 45H346.900c25.300 0 46.300-19.700 47.900-45L416 128z"/></svg></div>
</div>
 </section>

 <section class="dist">
  <div class="ch"><svg class="chi" viewBox="0 0 576 512"><path fill="currentColor" d="M304 240V16.600c0-9 7-16.600 16-16.600C443.700 0 544 100.300 544 224c0 9-7.600 16-16.600 16H304zM32 272C32 150.700 122.100 50.300 239 34.300c9.200-1.300 17 6.100 17 15.400V288L412.500 444.500c6.700 6.700 6.200 17.700-1.500 23.100C371.800 495.600 323.800 512 272 512C139.500 512 32 404.600 32 272zm526.400 16c9.300 0 16.600 7.800 15.400 17c-7.700 55.900-34.600 105.600-73.900 142.300c-6 5.600-15.400 5.200-21.200-.7L320 288H558.400z"/></svg><span>Score Distribution</span></div>
  <div class="gr" style="top:87.5px"><b>A</b><span class="gc">27</span><div class="trk"><div class="fill" style="width:27%;background:#4caf50"></div></div><span class="gp">27%</span></div><div class="gr" style="top:135.5px"><b>B</b><span class="gc">29</span><div class="trk"><div class="fill" style="width:29%;background:#2196f3"></div></div><span class="gp">29%</span></div><div class="gr" style="top:183.5px"><b>C</b><span class="gc">15</span><div class="trk"><div class="fill" style="width:15%;background:#ff9800"></div></div><span class="gp">15%</span></div><div class="gr" style="top:231.5px"><b>D</b><span class="gc">12</span><div class="trk"><div class="fill" style="width:12%;background:#ff5722"></div></div><span class="gp">12%</span></div><div class="gr" style="top:279.5px"><b>F</b><span class="gc">17</span><div class="trk"><div class="fill" style="width:17%;background:#f44336"></div></div><span class="gp">17%</span></div>
 </section>
 <section class="hsl">
  <div class="ch"><svg class="chi" viewBox="0 0 448 512"><path fill="currentColor" d="M224 0c-17.700 0-32 14.300-32 32V51.200C119 66 64 130.600 64 208v18.800c0 47-17.300 92.400-48.500 127.600l-7.400 8.300c-8.400 9.400-10.400 22.900-5.300 34.400S19.400 416 32 416H416c12.600 0 24-7.400 29.200-18.900s3.100-25-5.300-34.400l-7.400-8.300C401.300 319.200 384 273.900 384 226.800V208c0-77.400-55-142-128-156.800V32c0-17.700-14.300-32-32-32zm45.300 493.300c12-12 18.700-28.300 18.700-45.300H224 160c0 17 6.700 33.300 18.700 45.300s28.300 18.700 45.300 18.700s33.300-6.700 45.300-18.700z"/></svg><span>High Score Leads</span></div>
  <div class="lead" style="top:81.0px"><div class="lav">LA</div><div class="ln">Levi Alexander</div><div class="lp">Psychology</div><div class="ls">100</div><div class="lg">A</div></div><div class="lead" style="top:184.5px"><div class="lav">LB</div><div class="ln">Luke Brooks</div><div class="lp">Executive MBA</div><div class="ls">99</div><div class="lg">A</div></div><div class="lead" style="top:288.0px"><div class="lav">VC</div><div class="ln">Vivian Cook</div><div class="lp">Computer Science</div><div class="ls">98</div><div class="lg">A</div></div>
 </section>
</main>
</div>
</body></html>
